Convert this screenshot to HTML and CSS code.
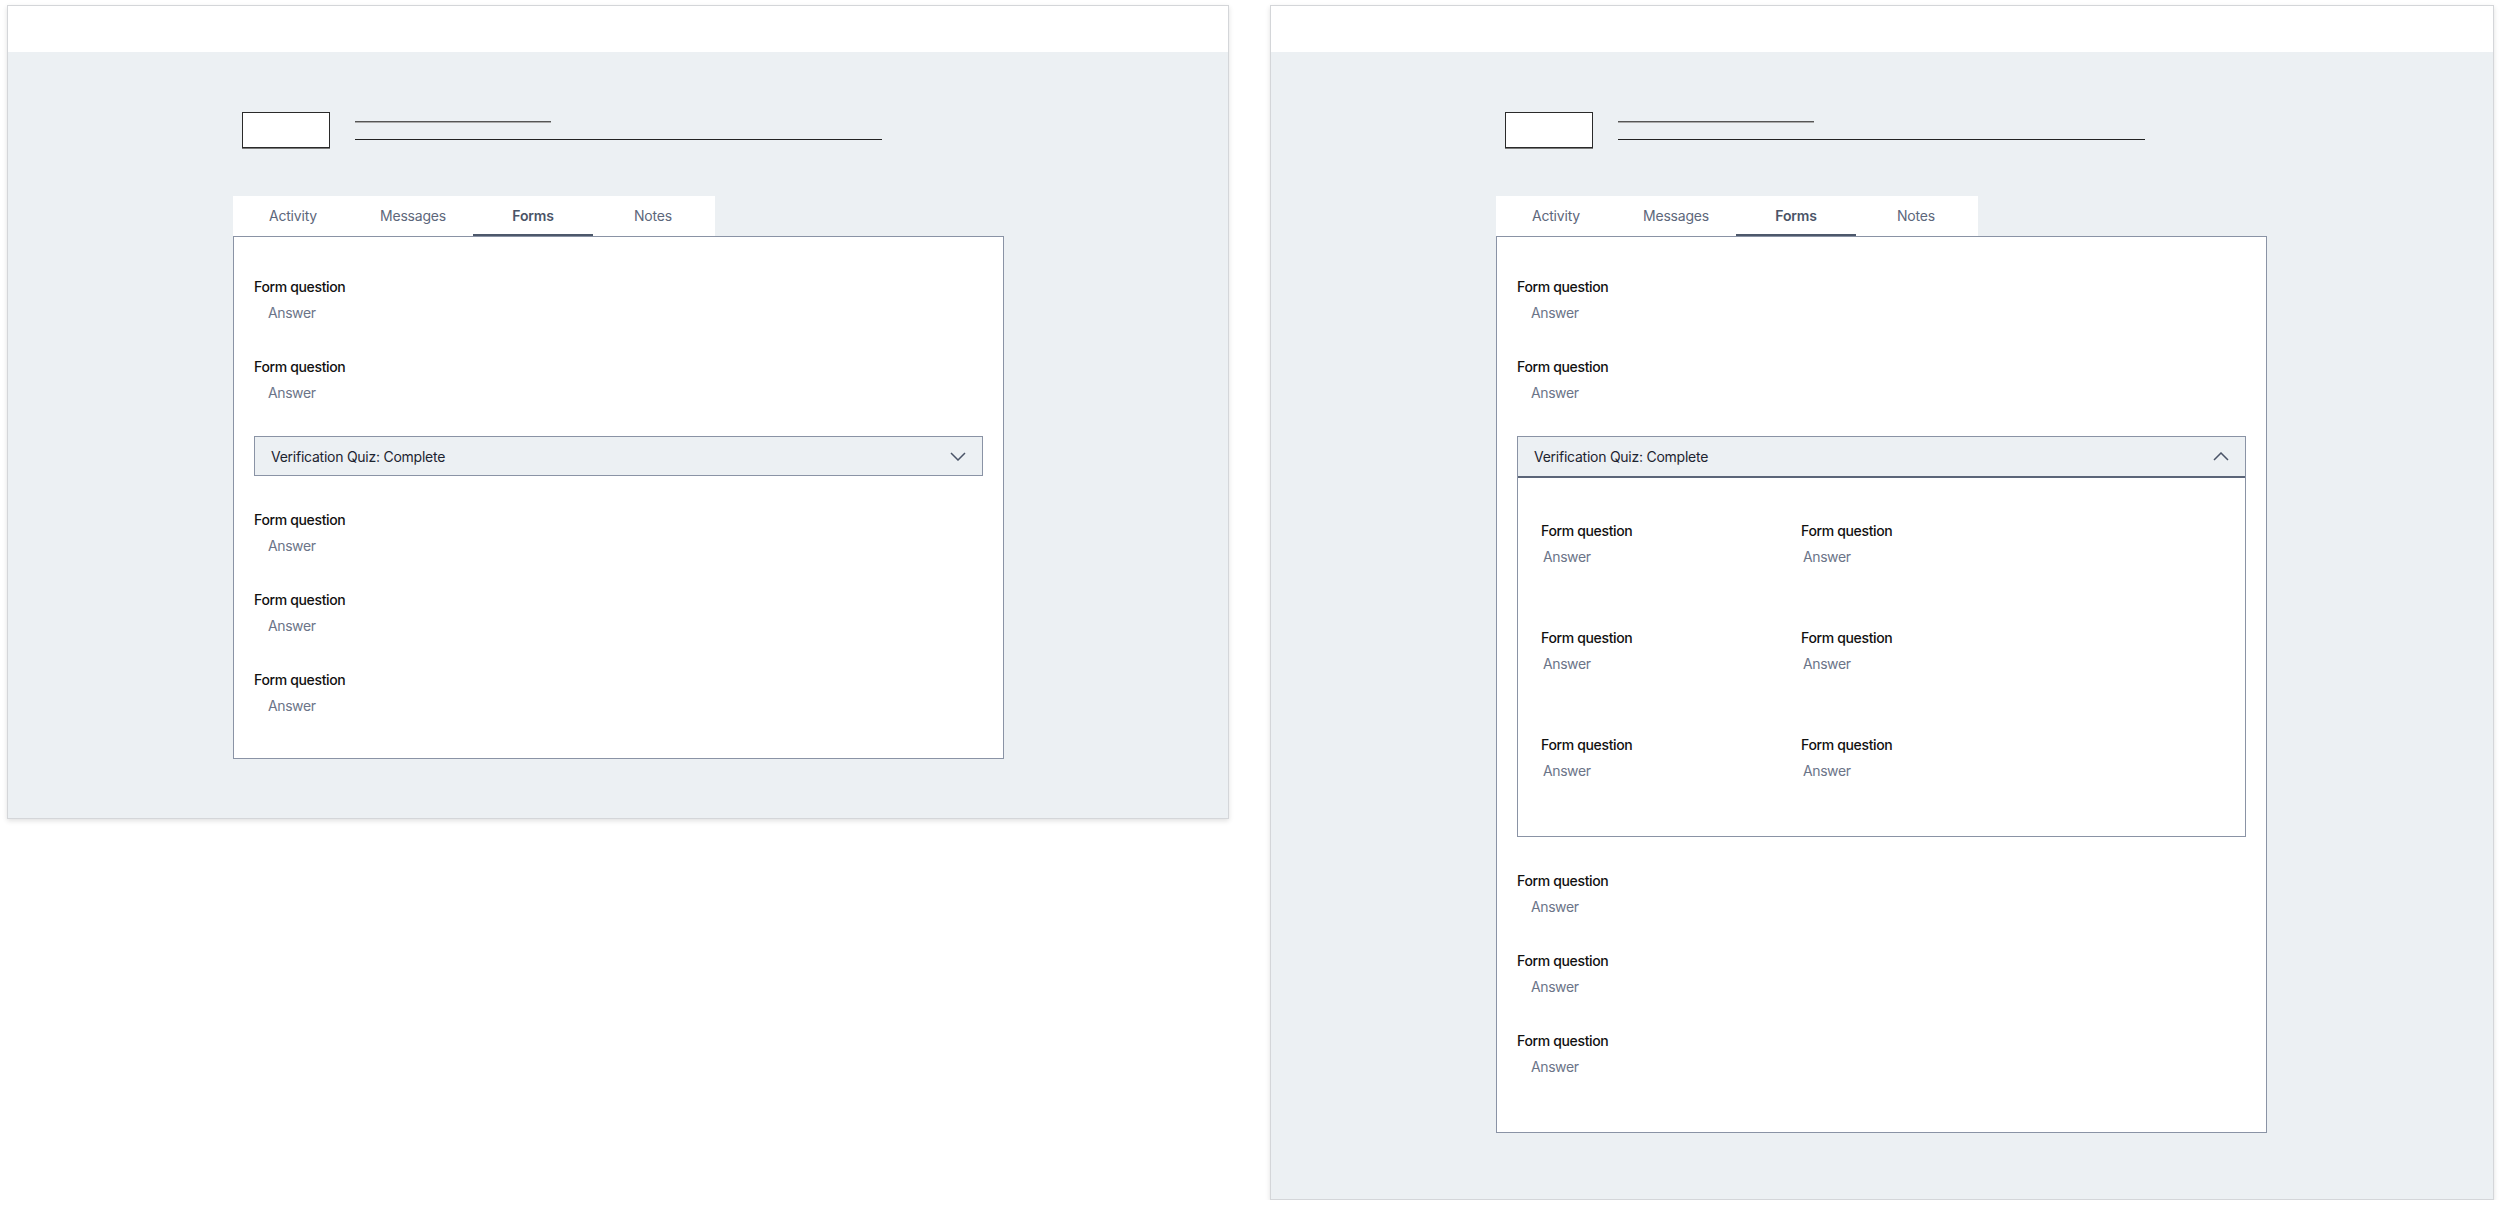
FILE: index.html
```html
<!DOCTYPE html>
<html lang="en">

<head>
    <meta charset="UTF-8">
    <meta name="viewport" content="width=device-width, initial-scale=1.0">
    <title>Forms tab</title>
    <link rel="stylesheet" href="styles.css">
</head>

<body>
    <div class="board">
        <!-- collapsed state -->
        <section class="frame">
            <header class="frame-top"></header>
            <main class="frame-body">
                <div class="profile">
                    <div class="avatar"></div>
                    <div class="profile-lines">
                        <span class="line short"></span>
                        <span class="line long"></span>
                    </div>
                </div>
                <nav class="tabs">
                    <a class="tab">Activity</a>
                    <a class="tab">Messages</a>
                    <a class="tab active">Forms</a>
                    <a class="tab">Notes</a>
                </nav>
                <div class="panel">
                    <div class="field">
                        <div class="question">Form question</div>
                        <div class="answer">Answer</div>
                    </div>
                    <div class="field">
                        <div class="question">Form question</div>
                        <div class="answer">Answer</div>
                    </div>
                    <div class="accordion">
                        <div class="accordion-head">
                            <span>Verification Quiz: Complete</span>
                            <svg class="chevron" width="16" height="9" viewBox="0 0 16 9"><polyline points="1,1 8,8 15,1" /></svg>
                        </div>
                    </div>
                    <div class="field">
                        <div class="question">Form question</div>
                        <div class="answer">Answer</div>
                    </div>
                    <div class="field">
                        <div class="question">Form question</div>
                        <div class="answer">Answer</div>
                    </div>
                    <div class="field">
                        <div class="question">Form question</div>
                        <div class="answer">Answer</div>
                    </div>
                </div>
            </main>
        </section>

        <!-- expanded state -->
        <section class="frame frame-tall">
            <header class="frame-top"></header>
            <main class="frame-body">
                <div class="profile">
                    <div class="avatar"></div>
                    <div class="profile-lines">
                        <span class="line short"></span>
                        <span class="line long"></span>
                    </div>
                </div>
                <nav class="tabs">
                    <a class="tab">Activity</a>
                    <a class="tab">Messages</a>
                    <a class="tab active">Forms</a>
                    <a class="tab">Notes</a>
                </nav>
                <div class="panel">
                    <div class="field">
                        <div class="question">Form question</div>
                        <div class="answer">Answer</div>
                    </div>
                    <div class="field">
                        <div class="question">Form question</div>
                        <div class="answer">Answer</div>
                    </div>
                    <div class="accordion open">
                        <div class="accordion-head">
                            <span>Verification Quiz: Complete</span>
                            <svg class="chevron" width="16" height="9" viewBox="0 0 16 9"><polyline points="1,8 8,1 15,8" /></svg>
                        </div>
                        <div class="accordion-body">
                            <div class="field">
                                <div class="question">Form question</div>
                                <div class="answer">Answer</div>
                            </div>
                            <div class="field">
                                <div class="question">Form question</div>
                                <div class="answer">Answer</div>
                            </div>
                            <div class="field">
                                <div class="question">Form question</div>
                                <div class="answer">Answer</div>
                            </div>
                            <div class="field">
                                <div class="question">Form question</div>
                                <div class="answer">Answer</div>
                            </div>
                            <div class="field">
                                <div class="question">Form question</div>
                                <div class="answer">Answer</div>
                            </div>
                            <div class="field">
                                <div class="question">Form question</div>
                                <div class="answer">Answer</div>
                            </div>
                        </div>
                    </div>
                    <div class="field">
                        <div class="question">Form question</div>
                        <div class="answer">Answer</div>
                    </div>
                    <div class="field">
                        <div class="question">Form question</div>
                        <div class="answer">Answer</div>
                    </div>
                    <div class="field">
                        <div class="question">Form question</div>
                        <div class="answer">Answer</div>
                    </div>
                </div>
            </main>
        </section>
    </div>
</body>

</html>
```

FILE: styles.css
```css
body {
    margin: 0;
    font-family: Inter, "Noto Sans", sans-serif;
    background-color: #ffffff;
}

.board {
    display: flex;
    align-items: flex-start;
    gap: 41px;
    padding: 5px 0 0 7px;
}

.frame {
    width: 1220px;
    background: #ecf0f3;
    border: 1px solid #d4d6d9;
    box-shadow: 0 2px 5px rgba(0, 0, 0, 0.12);
}

.frame-tall {
    width: 1222px;
}

.frame-top {
    height: 46px;
    background: #ffffff;
}

.frame-body {
    padding: 60px 0 59px 225px;
}

.frame-tall .frame-body {
    padding-bottom: 66px;
}

.profile {
    display: flex;
    align-items: flex-start;
    gap: 25px;
    margin-left: 9px;
}

.avatar {
    width: 86px;
    height: 34px;
    background: #ffffff;
    border: 1px solid #2a2a2a;
    box-shadow: 0 1px 0 #7a7a7a;
}

.profile-lines {
    display: flex;
    flex-direction: column;
    gap: 17px;
    padding-top: 9px;
}

.line {
    display: block;
    height: 1px;
    background: #333;
}

.line.short {
    width: 196px;
    background: #555;
    box-shadow: 0 1px 0 #aaa;
}

.line.long {
    width: 527px;
    background: #222;
}

.tabs {
    display: flex;
    width: 482px;
    margin-top: 48px;
    background: #ffffff;
}

.tab {
    width: 120px;
    height: 40px;
    line-height: 40px;
    text-align: center;
    font-size: 14px;
    letter-spacing: -0.2px;
    color: #5d677b;
    cursor: pointer;
}

.tab.active {
    font-weight: 600;
    color: #4a5467;
    box-shadow: inset 0 -2px 0 #4d586b;
}

.panel {
    width: 771px;
    padding: 23px 20px 25px;
    box-sizing: border-box;
    background: #ffffff;
    border: 1px solid #8a93a5;
}

.frame-tall .panel {
    padding-bottom: 38px;
}

.field {
    padding: 17px 0;
}

.question {
    font-size: 14px;
    line-height: 20px;
    font-weight: 500;
    letter-spacing: -0.35px;
    color: #111;
}

.answer {
    margin-top: 6px;
    padding-left: 14px;
    font-size: 14px;
    line-height: 20px;
    letter-spacing: -0.4px;
    color: #6b7488;
}

.accordion {
    margin: 16px 0 17px;
    border: 1px solid #8a93a5;
}

.accordion-head {
    display: flex;
    align-items: center;
    justify-content: space-between;
    height: 38px;
    padding: 0 16px 0 16px;
    background: #ecf0f3;
    font-size: 14px;
    letter-spacing: -0.25px;
    color: #1d2430;
}

.accordion.open .accordion-head {
    height: 39px;
    border-bottom: 2px solid #5b6578;
}

.chevron {
    fill: none;
    stroke: #4a5467;
    stroke-width: 1.5;
}

.accordion-body {
    display: grid;
    grid-template-columns: 260px 260px;
    row-gap: 61px;
    padding: 43px 23px 55px;
    background: #ffffff;
}

.accordion-body .field {
    padding: 0;
}

.accordion-body .answer {
    padding-left: 2px;
}
```
